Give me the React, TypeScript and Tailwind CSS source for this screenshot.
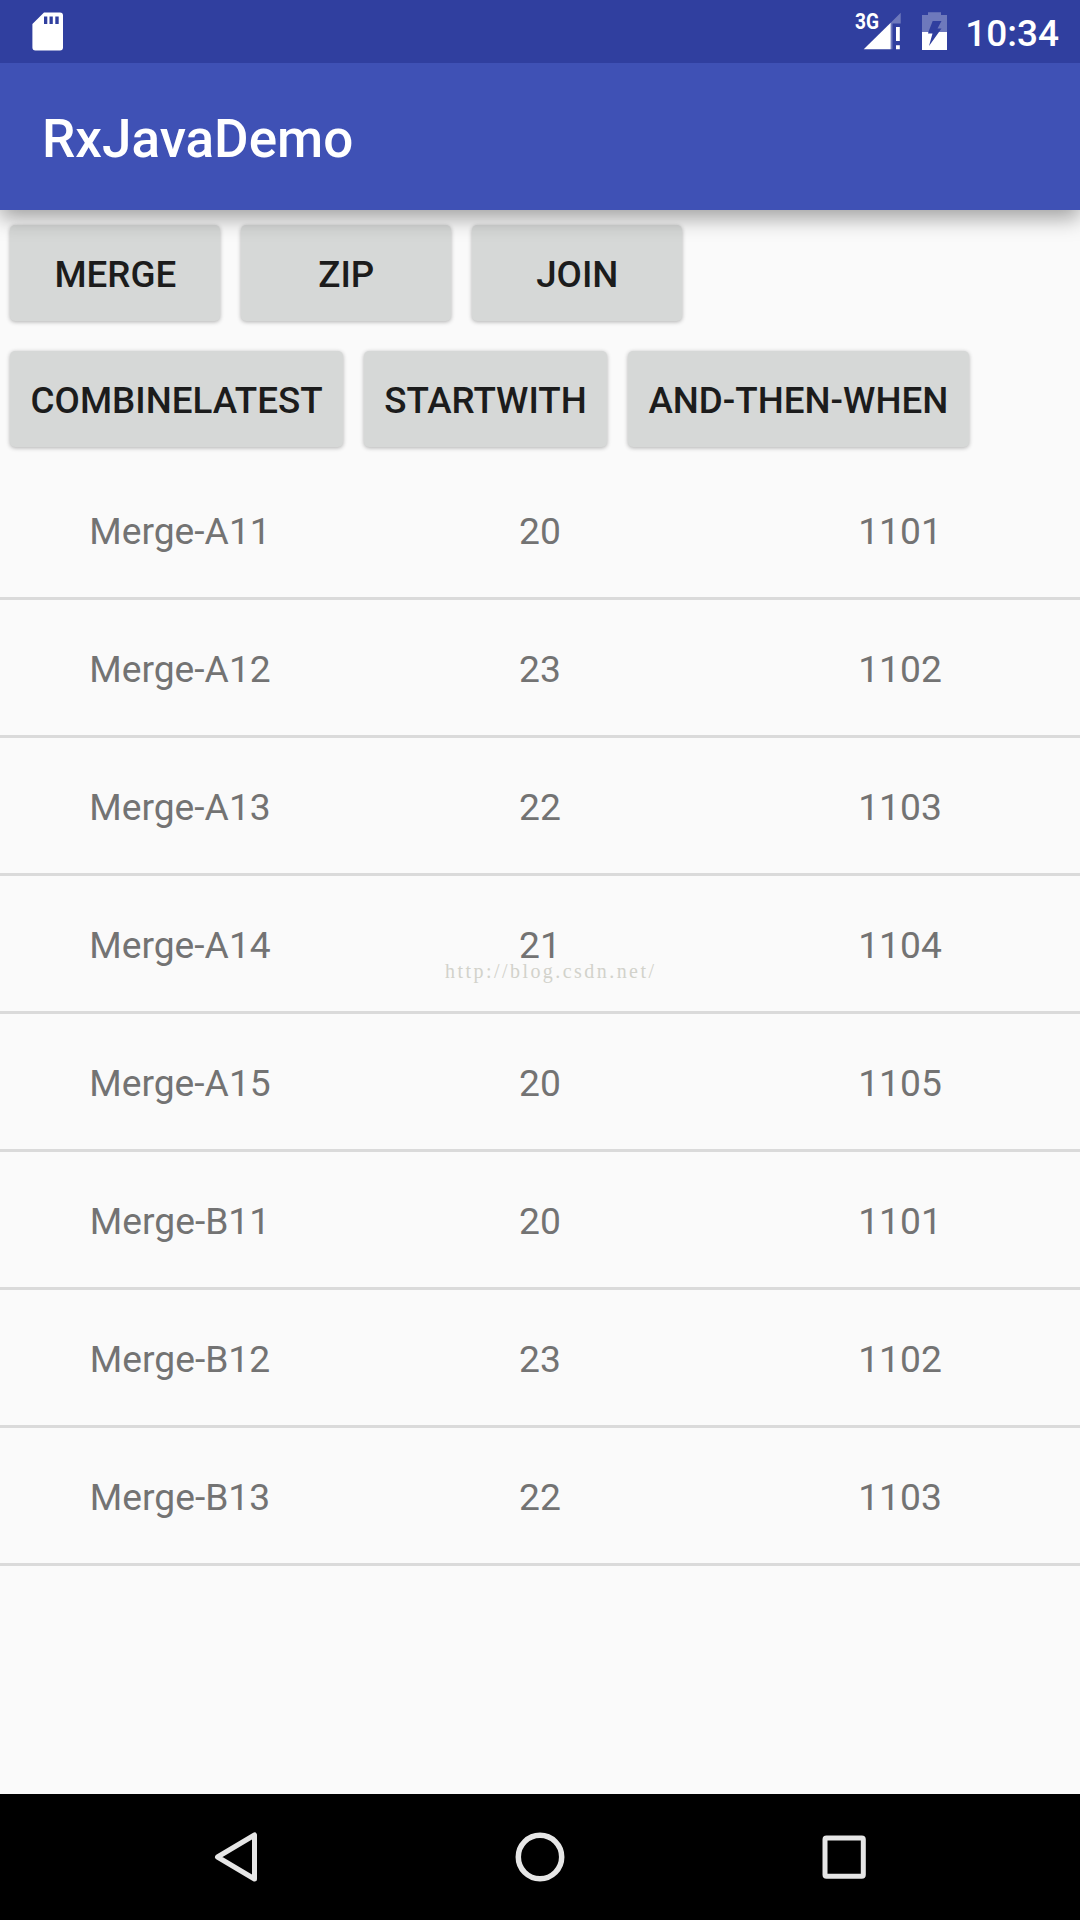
const actions = [
  ["MERGE", "ZIP", "JOIN"],
  ["COMBINELATEST", "STARTWITH", "AND-THEN-WHEN"],
];

interface Student {
  name: string;
  age: number;
  id: string;
}

const students: Student[] = [
  { name: "Merge-A11", age: 20, id: "1101" },
  { name: "Merge-A12", age: 23, id: "1102" },
  { name: "Merge-A13", age: 22, id: "1103" },
  { name: "Merge-A14", age: 21, id: "1104" },
  { name: "Merge-A15", age: 20, id: "1105" },
  { name: "Merge-B11", age: 20, id: "1101" },
  { name: "Merge-B12", age: 23, id: "1102" },
  { name: "Merge-B13", age: 22, id: "1103" },
];

function StatusBar() {
  return (
    <div className="relative z-20 flex h-[63px] items-center justify-between bg-[#303f9f] text-white">
      {/* sd card */}
      <svg className="ml-8 h-[63px] w-8" viewBox="0 0 32 63" fill="white">
        <path
          fillRule="evenodd"
          d="M12 12.5H28a3 3 0 0 1 3 3V47.5a3 3 0 0 1-3 3H3.4a3 3 0 0 1-3-3V24ZM12 16.5V24H15.3V16.5ZM17.5 16.5V24H20.8V16.5ZM23.3 16.5V24H26.7V16.5Z"
        />
      </svg>
      <div className="flex items-center">
        <svg className="h-[63px] w-[115px]" viewBox="850 0 115 63" fill="white">
          <text
            x="855"
            y="29"
            fontSize="22"
            fontWeight="700"
            textLength="24"
            lengthAdjust="spacingAndGlyphs"
          >
            3G
          </text>
          <path fillOpacity="0.3" d="M900.7 12.7V23.5H892.5V49.3H890.7V22.7Z" />
          <path d="M863.7 49.3L890.7 22.7V49.3Z" />
          <path d="M896 27H899.8V41H896ZM896 45.2H899.8V49.2H896Z" />
          {/* battery, charged about half way */}
          <path
            fillOpacity="0.3"
            d="M928 12.3H941V15H947V32H939L941.5 28.5H937.5L941.5 21H932.7L928.4 32H922V15H928Z"
          />
          <path d="M922 32H928.4L928 33.5H932.5L929 46L939 32H947V50H922Z" />
        </svg>
        <span className="mr-[21px] pt-[5px] text-[37px] font-medium">10:34</span>
      </div>
    </div>
  );
}

function ActionButton({ label }: { label: string }) {
  return (
    <button className="h-24 min-w-[210px] rounded-[5px] bg-[#d6d8d7] px-[20.3px] pt-[3px] text-[36.75px] font-medium text-[#1c1c1c] shadow-[0_1px_4px_rgba(0,0,0,0.3)]">
      {label}
    </button>
  );
}

function NavigationBar() {
  return (
    <div className="flex h-[126px] items-center justify-center gap-[178px] bg-black">
      <svg className="h-[126px] w-[126px]" viewBox="173 1794 126 126" fill="none" stroke="#e6e6e6" strokeWidth="5">
        <path strokeLinejoin="round" d="M254.5 1835V1879L217.5 1857Z" />
      </svg>
      <svg className="h-[126px] w-[126px]" viewBox="477 1794 126 126" fill="none" stroke="#e6e6e6" strokeWidth="5.5">
        <circle cx="540" cy="1857" r="21.7" />
      </svg>
      <svg className="h-[126px] w-[126px]" viewBox="781 1794 126 126" fill="none" stroke="#e6e6e6" strokeWidth="5">
        <rect x="825" y="1838" width="38.3" height="38.3" rx="1.5" />
      </svg>
    </div>
  );
}

export default function App() {
  return (
    <div className="flex h-[1920px] w-[1080px] flex-col bg-[#fafafa] font-['Roboto',sans-serif]">
      <StatusBar />
      <header className="relative z-10 flex h-[147px] items-center bg-[#3f51b5] px-[42px] pt-1.5 shadow-[0_8px_20px_rgba(0,0,0,0.36)]">
        <h1 className="text-[53px] font-medium text-white">RxJavaDemo</h1>
      </header>

      <main className="relative flex-1">
        <div className="flex flex-col gap-[30px] px-[10.3px] pt-[15px]">
          {actions.map((row, index) => (
            <div key={index} className="flex gap-[21px]">
              {row.map((label) => (
                <ActionButton key={label} label={label} />
              ))}
            </div>
          ))}
        </div>

        <div className="mt-[15px]">
          {students.map((student, index) => (
            <div
              key={index}
              className="grid h-[138px] grid-cols-3 items-center border-b-3 border-[#dadada] pt-[5px] text-center text-[37.2px] text-[#737373]"
            >
              <span>{student.name}</span>
              <span>{student.age}</span>
              <span>{student.id}</span>
            </div>
          ))}
        </div>

        {/* watermark */}
        <span className="absolute top-[746px] left-[445px] font-['Liberation_Serif',serif] text-[20px] tracking-[2.45px] text-[#d2d2cb]">
          http://blog.csdn.net/
        </span>
      </main>

      <NavigationBar />
    </div>
  );
}
